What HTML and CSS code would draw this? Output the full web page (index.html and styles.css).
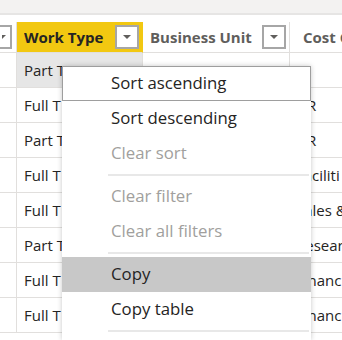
FILE: index.html
```html
<!DOCTYPE html>
<html>
<head>
<meta charset="utf-8">
<link rel="stylesheet" href="styles.css">
</head>
<body>
<div class="topbar"></div>
<div class="gap"></div>
<div class="table">
  <div class="hcell c0"><span class="dd dd-left"><span class="tri"></span></span></div>
  <div class="hcell c1 active"><span class="htext">Work Type</span><span class="dd"><span class="tri"></span></span></div>
  <div class="hcell c2"><span class="htext muted">Business Unit</span><span class="dd"><span class="tri"></span></span></div>
  <div class="hcell c3"><span class="htext muted">Cost C</span></div>

  <div class="cell c0"></div><div class="cell c1 hover">Part T</div><div class="cell c2">IT</div><div class="cell c3"></div>
  <div class="cell c0"></div><div class="cell c1">Full T</div><div class="cell c2">HR</div><div class="cell c3">HR</div>
  <div class="cell c0"></div><div class="cell c1">Part T</div><div class="cell c2">HR</div><div class="cell c3">HR</div>
  <div class="cell c0"></div><div class="cell c1">Full T</div><div class="cell c2">Facilities</div><div class="cell c3">Faciliti</div>
  <div class="cell c0"></div><div class="cell c1">Full T</div><div class="cell c2">Sales</div><div class="cell c3">Sales &amp;</div>
  <div class="cell c0"></div><div class="cell c1">Part T</div><div class="cell c2">Research</div><div class="cell c3">Resear</div>
  <div class="cell c0"></div><div class="cell c1">Full T</div><div class="cell c2">Finance</div><div class="cell c3">Financ</div>
  <div class="cell c0"></div><div class="cell c1">Full T</div><div class="cell c2">Finance</div><div class="cell c3">Financ</div>
</div>

<div class="menu">
  <div class="item focused">Sort ascending</div>
  <div class="item">Sort descending</div>
  <div class="item disabled">Clear sort</div>
  <div class="sep"></div>
  <div class="item disabled">Clear filter</div>
  <div class="item disabled">Clear all filters</div>
  <div class="sep"></div>
  <div class="item selected">Copy</div>
  <div class="item">Copy table</div>
  <div class="sep"></div>
</div>
</body>
</html>
```
FILE: styles.css
```css
html, body {
  margin: 0;
  padding: 0;
  background: #ffffff;
  overflow: hidden;
  width: 342px;
  height: 340px;
  font-family: "Open Sans", "Noto Sans", sans-serif;
  color: #252423;
}
body {
  position: relative;
}
.topbar {
  height: 13px;
  background: #f3f2f1;
  border-bottom: 2px solid #e6e5e4;
}
.gap {
  height: 7px;
}
.table {
  display: grid;
  grid-template-columns: 17px 126px 147px 70px;
  grid-auto-rows: 35px;
  grid-template-rows: 31px;
  width: 342px;
  height: 318px;
  overflow: hidden;
}
.hcell {
  display: flex;
  align-items: center;
  border-right: 1px solid #e1dfdd;
  border-bottom: 1px solid #e1dfdd;
  padding: 0 3px 0 7px;
  font-weight: 700;
  font-size: 15px;
  overflow: hidden;
  white-space: nowrap;
}
.hcell.c0 {
  padding: 0;
  justify-content: flex-end;
}
.hcell.c3 {
  padding-left: 13px;
  border-right: none;
}
.hcell.active {
  background: #f2c811;
  border-right-color: #f2c811;
}
.htext {
  flex: 1;
  overflow: hidden;
}
.muted {
  color: #605e5c;
}
.dd {
  flex: none;
  width: 24px;
  height: 24px;
  border: 2px solid #a6a6a6;
  background: #ffffff;
  display: flex;
  justify-content: center;
  padding-top: 8px;
  box-sizing: border-box;
}
.dd-left {
  margin-right: 4px;
  justify-content: flex-end;
  width: 12px;
  border-left: none;
  padding-right: 4px;
}
.tri {
  width: 0;
  height: 0;
  border-left: 4px solid transparent;
  border-right: 4px solid transparent;
  border-top: 4px solid #605e5c;
}
.dd-left .tri {
  border-left-width: 0;
}
.cell {
  display: flex;
  align-items: center;
  border-right: 1px solid #e1dfdd;
  border-bottom: 1px solid #e1dfdd;
  padding-left: 7px;
  font-size: 15px;
  white-space: nowrap;
  overflow: hidden;
}
.cell.c0 {
  padding: 0;
}
.cell.c3 {
  padding-left: 6px;
  border-right: none;
}
.cell.hover {
  background: #e6e6e6;
}
.menu {
  position: absolute;
  left: 62px;
  top: 66px;
  width: 249px;
  height: 274px;
  overflow: hidden;
  background: #ffffff;
  box-shadow: 0 0 5px rgba(0, 0, 0, 0.22);
  font-size: 16.8px;
}
.item {
  height: 35px;
  display: flex;
  align-items: center;
  padding-left: 49px;
  padding-bottom: 2px;
  box-sizing: border-box;
  white-space: nowrap;
  color: #252423;
}
.item.focused {
  border: 1px solid #9e9e9e;
  padding-left: 48px;
}
.item.disabled {
  color: #a19f9d;
}
.item.selected {
  background: #c8c8c8;
}
.sep {
  height: 2px;
  margin: 3px 2px 3px 46px;
  background: #e8e8e8;
}
```
